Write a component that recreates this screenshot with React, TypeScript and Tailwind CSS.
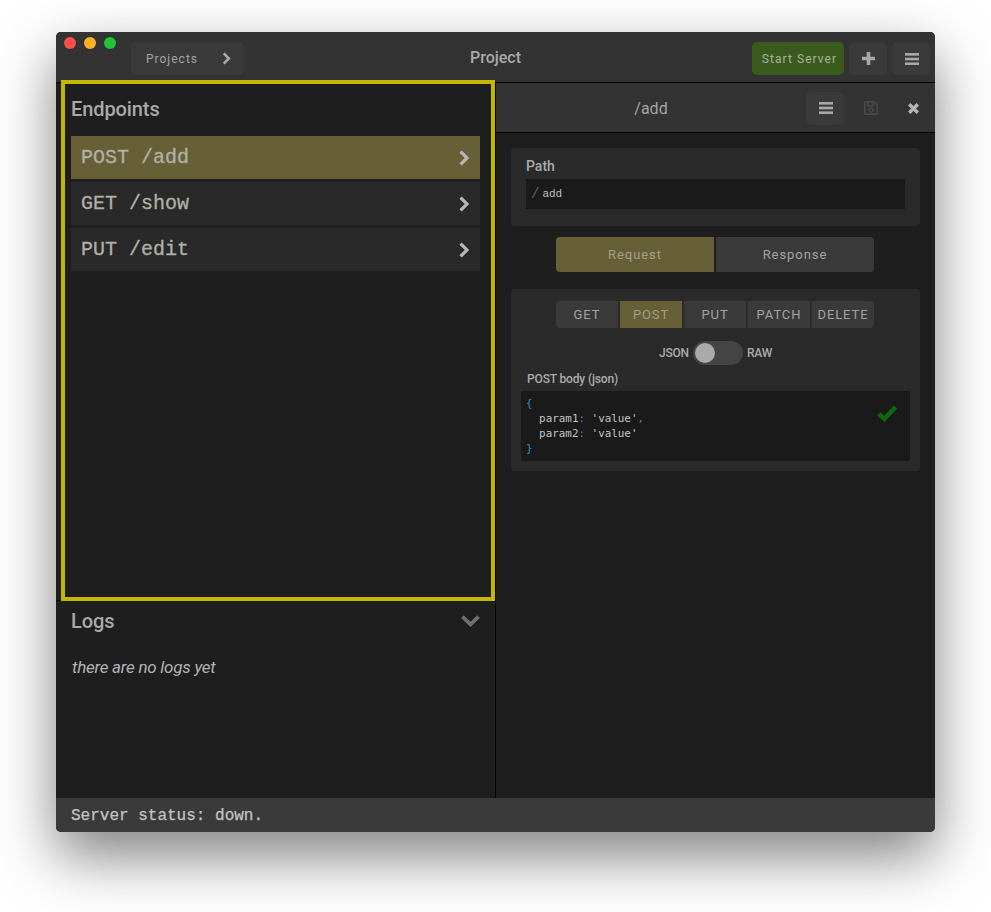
import React from "react";
import { FaRegSave } from "react-icons/fa";

const endpoints = [
  { label: "POST /add", active: true },
  { label: "GET /show", active: false },
  { label: "PUT /edit", active: false },
];

const methods = ["GET", "POST", "PUT", "PATCH", "DELETE"];

const ChevronRight = ({ className }: { className: string }) => (
  <svg viewBox="0 0 10 16" className={className} fill="none" stroke="currentColor" strokeWidth="3.2">
    <path d="M1.6 1.6 L7.9 8 L1.6 14.4" />
  </svg>
);

const ChevronDown = ({ className }: { className: string }) => (
  <svg viewBox="0 0 19 12" className={className} fill="none" stroke="currentColor" strokeWidth="3.8">
    <path d="M1.4 1.6 L9.5 9.4 L17.6 1.6" />
  </svg>
);

const Bars = ({ className }: { className: string }) => (
  <svg viewBox="0 0 14 12" className={className} fill="currentColor">
    <rect x="0" y="0" width="14" height="2.6" />
    <rect x="0" y="4.7" width="14" height="2.6" />
    <rect x="0" y="9.4" width="14" height="2.6" />
  </svg>
);

const Plus = ({ className }: { className: string }) => (
  <svg viewBox="0 0 13 13" className={className} fill="currentColor">
    <path d="M4.7 0 H8.3 V4.7 H13 V8.3 H8.3 V13 H4.7 V8.3 H0 V4.7 H4.7 Z" />
  </svg>
);

const Close = ({ className }: { className: string }) => (
  <svg viewBox="0 0 11 11" className={className} fill="none" stroke="currentColor" strokeWidth="3.4">
    <path d="M1.2 1.2 L9.8 9.8 M9.8 1.2 L1.2 9.8" />
  </svg>
);

const Check = ({ className }: { className: string }) => (
  <svg viewBox="0 0 20 17" className={className} fill="none" stroke="currentColor" strokeWidth="4.4">
    <path d="M1.8 8.8 L7.4 14 L18.4 2" />
  </svg>
);

const App: React.FC = () => {
  return (
    <div className="w-[991px] h-[912px] bg-white pt-[32px] pl-[56px] font-['Roboto',sans-serif] overflow-hidden">
      <div className="relative w-[879px] h-[800px] flex flex-col rounded-[5px] overflow-hidden bg-[#1e1e1e] shadow-[0_24px_58px_0_rgba(0,0,0,0.5)]">
        {/* Title bar */}
        <div className="h-[51px] shrink-0 grid grid-cols-[1fr_auto_1fr] bg-[#333333] border-b border-black">
          <div className="flex items-start">
            <div className="flex gap-2 pl-2 pt-[5px]">
              <span className="w-3 h-3 rounded-full bg-[#fc4f4b]" />
              <span className="w-3 h-3 rounded-full bg-[#fdb024]" />
              <span className="w-3 h-3 rounded-full bg-[#1fc432]" />
            </div>
            <button className="ml-[15px] mt-[10px] w-[113px] h-[33px] flex items-center justify-between pl-[15px] pr-[13px] rounded-[5px] bg-[#3a3a3a] text-[#a3a3a3] text-[12px] tracking-[1px]">
              Projects
              <ChevronRight className="w-[9px] h-[13px] text-[#a8a8a8]" />
            </button>
          </div>
          <div className="flex items-center justify-center text-[16px] font-medium text-[#aaaaaa] pt-[2px]">Project</div>
          <div className="flex justify-end items-start gap-[5px] pt-[10px] pr-[5px]">
            <button className="w-[92px] h-[33px] pl-[3px] rounded-[5px] bg-[#3b5a1e] text-[#a9b3a0] text-[12px] tracking-[1.05px]">
              Start Server
            </button>
            <button className="w-[38px] h-[33px] rounded-[5px] bg-[#3a3a3a] flex items-center justify-center text-[#a8a8a8]">
              <Plus className="w-[13px] h-[13px]" />
            </button>
            <button className="w-[38px] h-[33px] pl-[1px] rounded-[5px] bg-[#3a3a3a] flex items-center justify-center text-[#a8a8a8]">
              <Bars className="w-[14px] h-[12px]" />
            </button>
          </div>
        </div>

        <div className="flex-1 flex min-h-0">
          {/* Left column */}
          <div className="w-[440px] shrink-0 flex flex-col border-r border-black">
            <div className="h-[518px] shrink-0 border-b border-black pl-[15px] pr-[15px] flex flex-col">
              <h2 className="h-[53px] pb-[2px] flex items-center text-[20px] font-medium text-[#aaaaaa] tracking-[-0.1px]">Endpoints</h2>
              <div className="flex flex-col gap-[3px]">
                {endpoints.map((item) => (
                  <div
                    key={item.label}
                    className={`h-[43px] flex items-center justify-between pl-[10px] pr-[11px] font-['Liberation_Mono',monospace] text-[20px] text-[#b0b0a8] [-webkit-text-stroke:0.3px_#b0b0a8] ${
                      item.active ? "bg-[#675f36]" : "bg-[#292929]"
                    }`}
                  >
                    {item.label}
                    <ChevronRight className="w-[10px] h-[16px] text-[#b8b8b8]" />
                  </div>
                ))}
              </div>
            </div>
            <div className="flex-1 px-[15px]">
              <div className="h-[40px] flex items-center justify-between pb-[0px]">
                <h2 className="text-[20px] font-medium text-[#aaaaaa] tracking-[-0.1px]">Logs</h2>
                <ChevronDown className="w-[19px] h-[12px] text-[#6f6f6f]" />
              </div>
              <p className="mt-[14px] ml-[1px] text-[17px] italic text-[#b4b4b4] tracking-[-0.25px] leading-[24px]">there are no logs yet</p>
            </div>
          </div>

          {/* Detail column */}
          <div className="flex-1 flex flex-col min-w-0">
            <div className="h-[50px] shrink-0 flex items-center bg-[#333333] border-b border-black">
              <div className="w-[310px] pt-[3px] text-center text-[16px] text-[#a3a3a3]">/add</div>
              <button className="w-[38px] h-[33px] mt-[1px] pl-[1px] rounded-[5px] bg-[#3a3a3a] flex items-center justify-center text-[#a8a8a8]">
                <Bars className="w-[14px] h-[12px]" />
              </button>
              <FaRegSave className="ml-[20px] mt-[1px] w-[14px] h-[16px] text-[#4a4a4a]" />
              <Close className="ml-[30px] mt-[2px] w-[11px] h-[11px] text-[#b4b4b4]" />
            </div>

            <div className="flex-1 px-[15px] pt-[15px]">
              <div className="h-[78px] rounded-[4px] bg-[#2a2a2a] px-[15px] pt-[9px]">
                <div className="h-[18px] flex items-center text-[14px] font-medium text-[#aaaaaa]">Path</div>
                <div className="mt-[4px] h-[30px] bg-[#1a1a1a] flex items-center pl-[5px] font-['Liberation_Mono',monospace] text-[11px] text-[#c0c0c0]">
                  <span className="text-[#6b6236] text-[14px] mr-[3px]">/</span>
                  add
                </div>
              </div>

              <div className="mt-[11px] pr-[1px] flex justify-center gap-[2px]">
                <button className="w-[158px] h-[35px] rounded-l-[4px] bg-[#675f36] text-[#a3a08a] text-[13px] tracking-[0.95px]">Request</button>
                <button className="w-[158px] h-[35px] rounded-r-[4px] bg-[#3a3a3a] text-[#a3a3a3] text-[13px] tracking-[0.95px]">Response</button>
              </div>

              <div className="mt-[17px] h-[182px] rounded-[4px] bg-[#2a2a2a] px-[10px] pt-[12px]">
                <div className="pr-[1px] flex justify-center gap-[2px]">
                  {methods.map((m, i) => (
                    <div
                      key={m}
                      className={`w-[62px] h-[27px] flex items-center justify-center text-[13px] tracking-[0.9px] ${
                        m === "POST" ? "bg-[#675f36] text-[#a3a08a]" : "bg-[#3a3a3a] text-[#a3a3a3]"
                      } ${i === 0 ? "rounded-l-[4px]" : ""} ${i === 4 ? "rounded-r-[4px]" : ""}`}
                    >
                      {m}
                    </div>
                  ))}
                </div>
                <div className="mt-[13px] flex items-center justify-center gap-[4px] text-[12px] font-medium text-[#aaaaaa] tracking-[-0.2px]">
                  JSON
                  <span className="w-[50px] h-[24px] rounded-full bg-[#444444] flex items-center pl-[2px]">
                    <span className="w-[20px] h-[20px] rounded-full bg-[#aaaaaa]" />
                  </span>
                  RAW
                </div>
                <div className="mt-[5px] ml-[6px] h-[18px] flex items-center text-[12px] font-medium text-[#aaaaaa] tracking-[-0.15px]">POST body (json)</div>
                <div className="relative mt-[3px] h-[70px] bg-[#1a1a1a] pl-[5px] pt-[5px] font-['DejaVu_Sans_Mono',monospace] text-[10.9px] leading-[15px] text-[#c4c4c4] whitespace-pre">
                  <div className="text-[#2d8fc9]">{"{"}</div>
                  <div>
                    {"  param1"}
                    <span className="text-[#2d8fc9]">:</span>
                    {" 'value'"}
                    <span className="text-[#2d8fc9]">,</span>
                  </div>
                  <div>
                    {"  param2"}
                    <span className="text-[#2d8fc9]">:</span>
                    {" 'value'"}
                  </div>
                  <div className="text-[#2d8fc9]">{"}"}</div>
                  <Check className="absolute right-[13px] top-[14px] w-[20px] h-[17px] text-[#0b6b0b]" />
                </div>
              </div>
            </div>
          </div>
        </div>

        {/* Status bar */}
        <div className="h-[34px] shrink-0 pt-[2px] bg-[#3a3a3a] flex items-center pl-[15px] font-['Liberation_Mono',monospace] text-[16px] text-[#c4c4c4] [-webkit-text-stroke:0.25px_#c4c4c4]">
          Server status: down.
        </div>

        {/* Highlight frame */}
        <div className="absolute left-[5px] top-[48px] w-[434px] h-[521px] border-[4px] border-[#c4b700] pointer-events-none" />
      </div>
    </div>
  );
};

export default App;
